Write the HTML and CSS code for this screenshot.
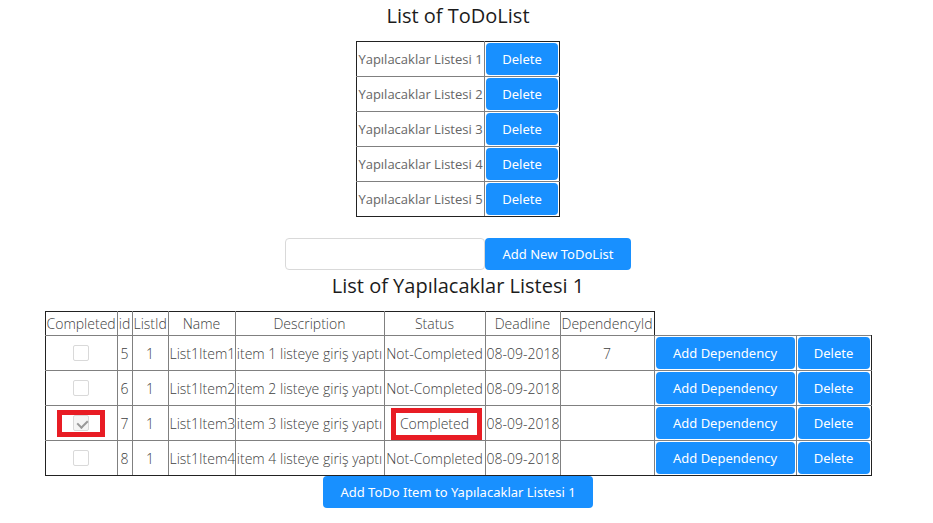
FILE: index.html
```html
<!DOCTYPE html>
<html lang="tr">
<head>
<meta charset="utf-8">
<title>ToDoList</title>
<link rel="stylesheet" href="styles.css">
</head>
<body>
<main class="page">
  <h1 class="title">List of ToDoList</h1>
  <table class="grid lists">
    <colgroup><col class="w-list"><col class="w-delete"></colgroup>
    <tbody>
      <tr><td>Yapılacaklar Listesi 1</td><td><button class="btn" type="button">Delete</button></td></tr>
      <tr><td>Yapılacaklar Listesi 2</td><td><button class="btn" type="button">Delete</button></td></tr>
      <tr><td>Yapılacaklar Listesi 3</td><td><button class="btn" type="button">Delete</button></td></tr>
      <tr><td>Yapılacaklar Listesi 4</td><td><button class="btn" type="button">Delete</button></td></tr>
      <tr><td>Yapılacaklar Listesi 5</td><td><button class="btn" type="button">Delete</button></td></tr>
    </tbody>
  </table>
  <form class="new-list">
    <input class="field" type="text" aria-label="New list name">
    <button class="btn add-list" type="button">Add New ToDoList</button>
  </form>
  <h2 class="title">List of Yapılacaklar Listesi <span class="light">1</span></h2>
  <table class="grid items">
    <colgroup><col class="w-completed"><col class="w-id"><col class="w-listid"><col class="w-name"><col class="w-description"><col class="w-status"><col class="w-deadline"><col class="w-dependency"><col class="w-add"><col class="w-delete"></colgroup>
    <thead>
      <tr><th>Completed</th><th>id</th><th>ListId</th><th>Name</th><th>Description</th><th>Status</th><th>Deadline</th><th>DependencyId</th></tr>
    </thead>
    <tbody>
      <tr><td><input class="check" type="checkbox" aria-label="List1Item1 completed"></td><td>5</td><td>1</td><td>List1Item1</td><td>item 1 listeye giriş yaptı</td><td>Not-Completed</td><td>08-09-2018</td><td>7</td><td><button class="btn" type="button">Add Dependency</button></td><td><button class="btn" type="button">Delete</button></td></tr>
      <tr><td><input class="check" type="checkbox" aria-label="List1Item2 completed"></td><td>6</td><td>1</td><td>List1Item2</td><td>item 2 listeye giriş yaptı</td><td>Not-Completed</td><td>08-09-2018</td><td></td><td><button class="btn" type="button">Add Dependency</button></td><td><button class="btn" type="button">Delete</button></td></tr>
      <tr><td class="marked mark-check"><input class="check" type="checkbox" aria-label="List1Item3 completed" checked disabled></td><td>7</td><td>1</td><td>List1Item3</td><td>item 3 listeye giriş yaptı</td><td class="marked mark-status">Completed</td><td>08-09-2018</td><td></td><td><button class="btn" type="button">Add Dependency</button></td><td><button class="btn" type="button">Delete</button></td></tr>
      <tr><td><input class="check" type="checkbox" aria-label="List1Item4 completed"></td><td>8</td><td>1</td><td>List1Item4</td><td>item 4 listeye giriş yaptı</td><td>Not-Completed</td><td>08-09-2018</td><td></td><td><button class="btn" type="button">Add Dependency</button></td><td><button class="btn" type="button">Delete</button></td></tr>
    </tbody>
  </table>
  <button class="btn add-item" type="button">Add ToDo Item to Yapılacaklar Listesi 1</button>
</main>
</body>
</html>
```
FILE: styles.css
```css
* { box-sizing: border-box; }
body {
  margin: 0;
  background: #fff;
  color: #404040;
  font: 300 14px/21px "Open Sans", "Noto Sans", sans-serif;
}
.page {
  display: flex;
  flex-direction: column;
  align-items: center;
  padding-right: 17px;
}
.title {
  margin: 0;
  color: #1c1c1c;
  font-size: 20px;
  font-weight: 500;
  line-height: 32px;
}
.light { font-weight: 400; }
.grid {
  border-collapse: collapse;
  table-layout: fixed;
  text-align: center;
  white-space: nowrap;
}
.grid th, .grid td {
  padding: 1px;
  border: 1px solid #808080;
  font-weight: 300;
}
.grid td { height: 35px; }
.grid th { height: 24px; }
.grid td:first-child, .grid th:first-child { border-left-color: #222; }
.grid td:last-child, .grid th:last-child { border-right-color: #222; }
.grid tr:last-child td { border-bottom-color: #222; }
.lists tr:first-child td, .items th { border-top-color: #222; }
.lists { margin-top: 9px; width: 204px; }
.lists td {
  color: #666;
  font-size: 13px;
  font-weight: 400;
}
.items { margin-top: 9px; width: 827px; }
.w-list { width: 128px; }
.w-completed { width: 72px; }
.w-id { width: 15px; }
.w-listid { width: 36px; }
.w-name { width: 67px; }
.w-description { width: 149px; }
.w-status { width: 101px; }
.w-deadline { width: 75px; }
.w-dependency { width: 94px; }
.w-add { width: 142px; }
.w-delete { width: 75px; }
.btn {
  display: block;
  width: 100%;
  height: 32px;
  padding: 0;
  border: 0;
  border-radius: 4px;
  background: #1890ff;
  color: #fff;
  font: 400 13px/32px "Noto Sans", "Open Sans", sans-serif;
  white-space: nowrap;
}
.new-list {
  display: flex;
  margin-top: 21px;
}
.field {
  width: 200px;
  height: 32px;
  border: 1px solid #d9d9d9;
  border-radius: 4px;
  font: inherit;
}
.add-list { width: 146px; }
.add-item { width: 270px; }
.check {
  appearance: none;
  display: block;
  width: 16px;
  height: 16px;
  margin: 0 auto;
  border: 1px solid #d9d9d9;
  border-radius: 2px;
  background: #fff;
}
.check:checked {
  position: relative;
  background: #f5f5f5;
}
.check:checked::after {
  content: "";
  position: absolute;
  left: 5px;
  top: 2px;
  width: 5px;
  height: 8px;
  border: solid #999;
  border-width: 0 2px 2px 0;
  transform: rotate(45deg);
}
.marked { position: relative; }
.marked::after {
  content: "";
  position: absolute;
  border: 5px solid #e81c24;
}
.mark-check::after { inset: 4px 12px 3px 11px; }
.mark-status::after { inset: 2px 3px 0 6px; }
```
